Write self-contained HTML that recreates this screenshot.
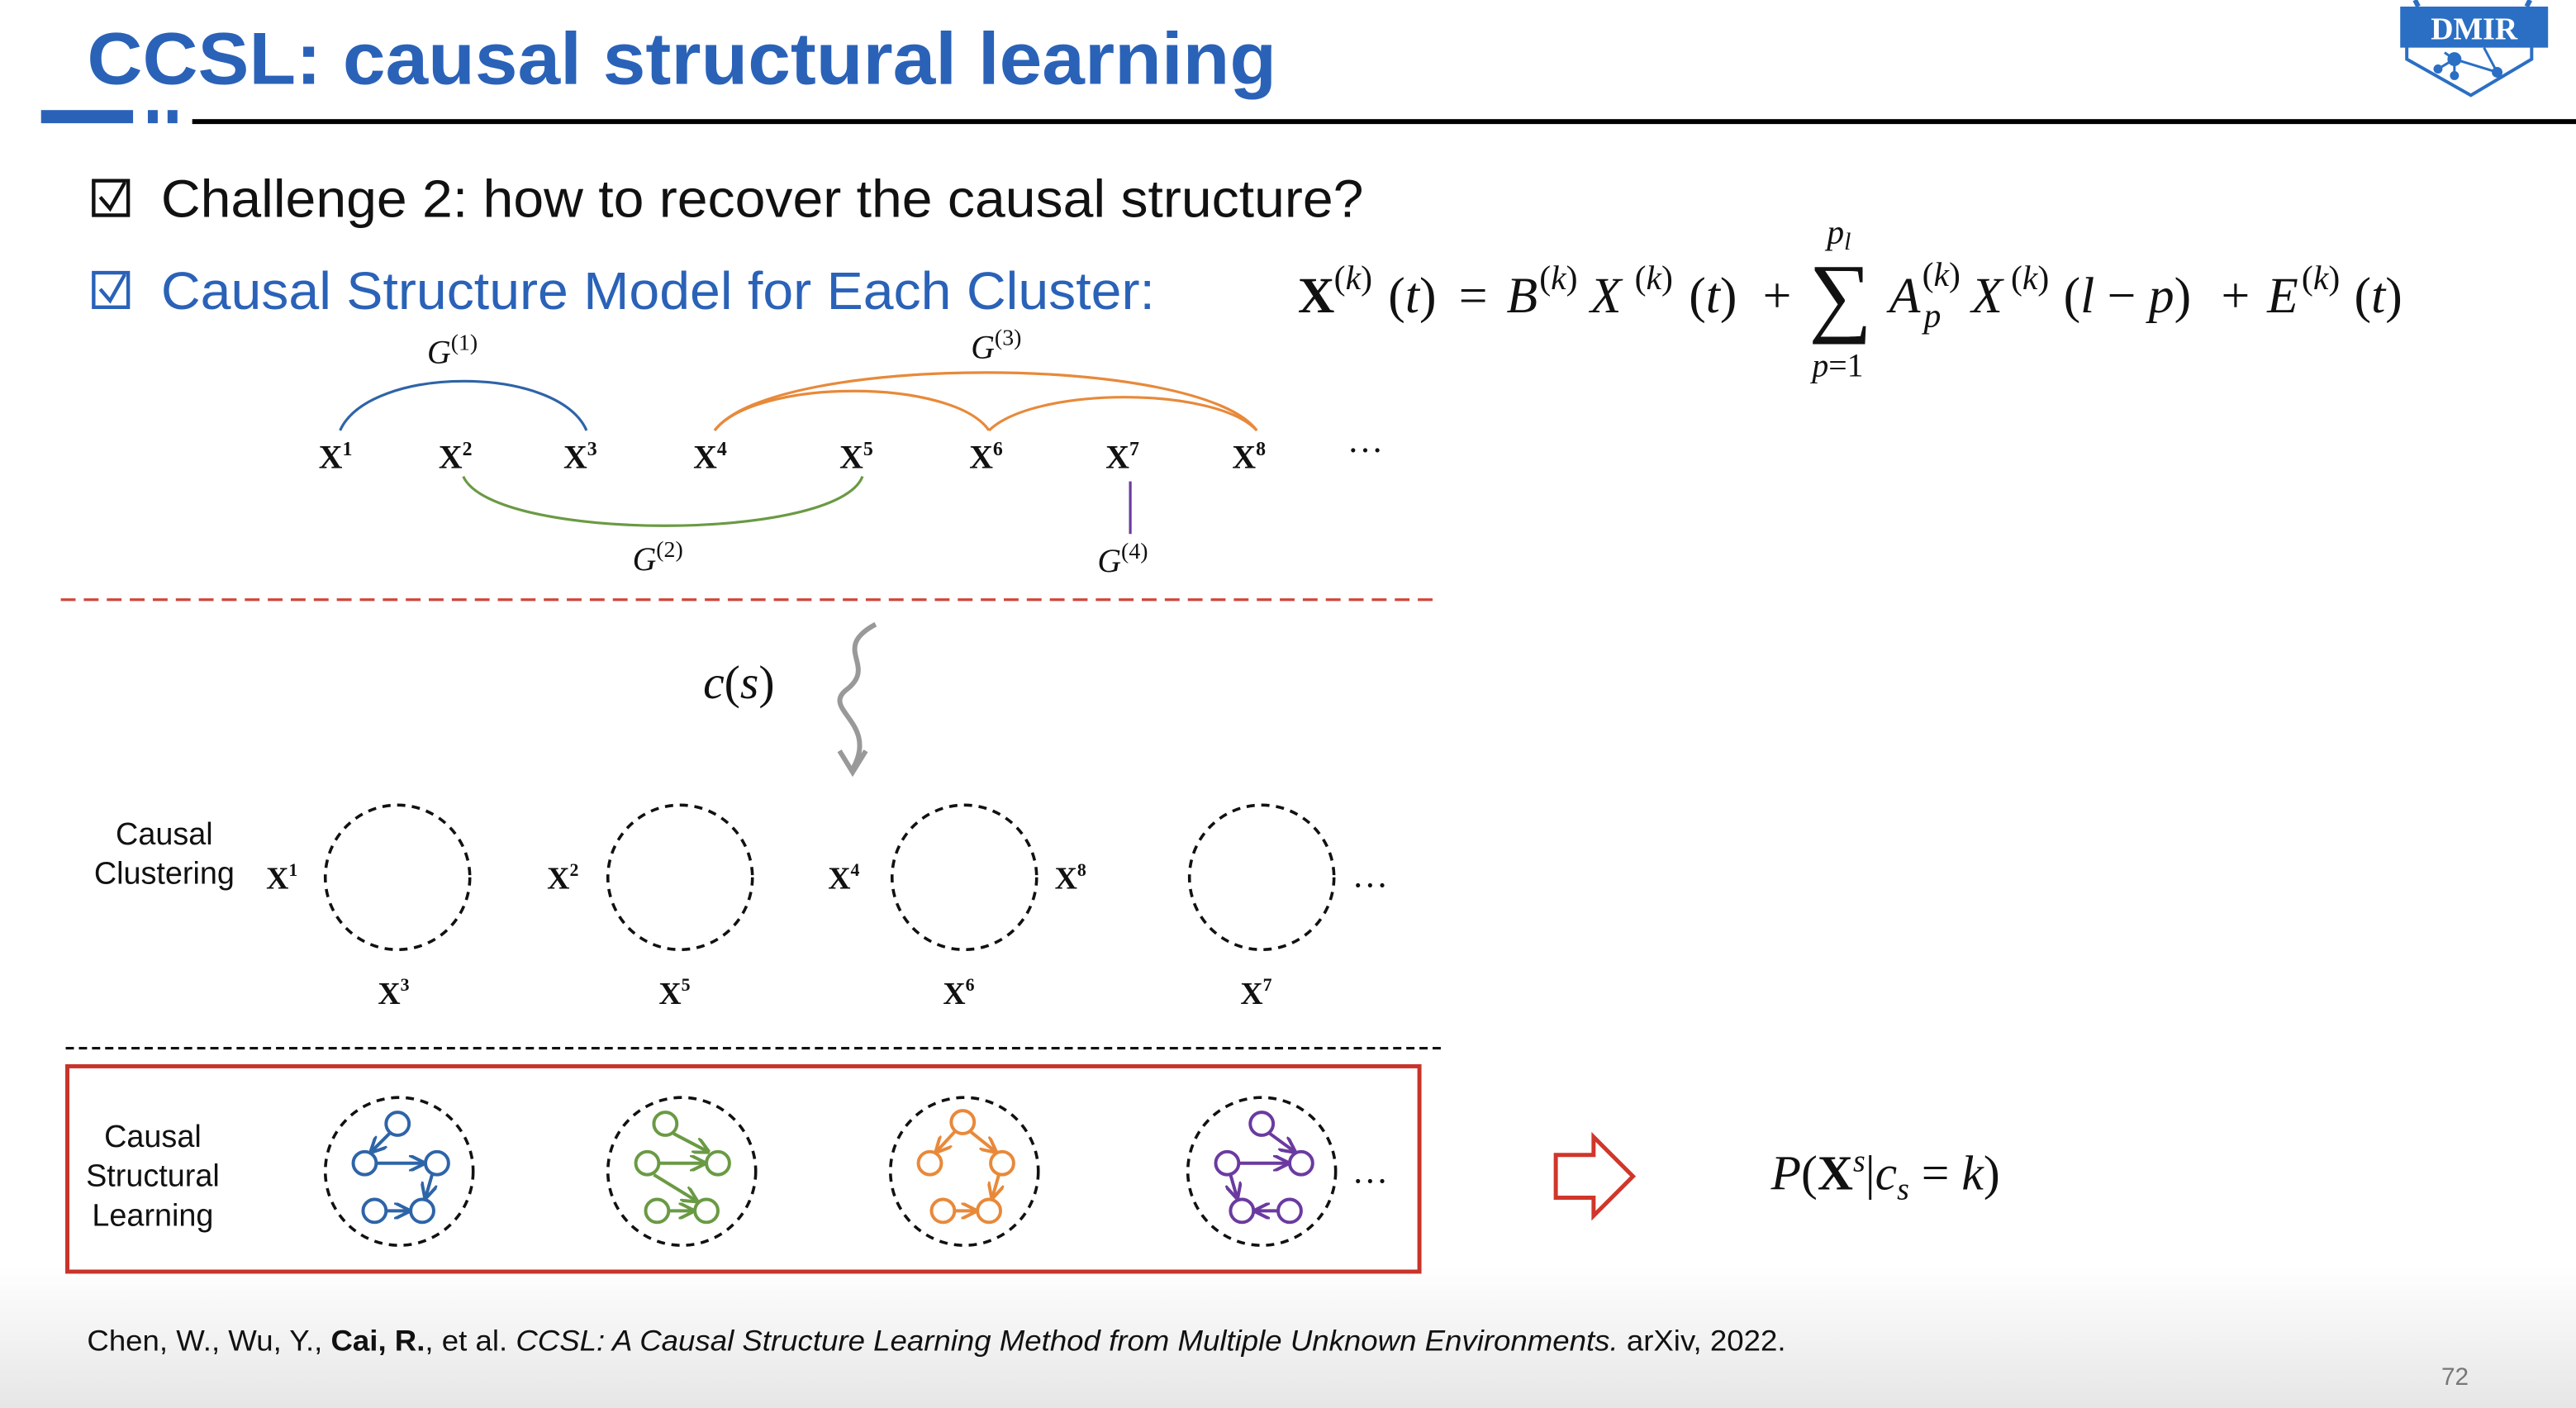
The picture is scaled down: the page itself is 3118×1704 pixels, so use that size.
<!DOCTYPE html>
<html><head><meta charset="utf-8">
<style>
html,body{margin:0;padding:0;background:#fff;}
svg{display:block;}
.s{font-family:"Liberation Serif",serif;}
.a{font-family:"Liberation Sans",sans-serif;}
</style></head><body>
<svg width="3118" height="1704" viewBox="0 0 1568 857" preserveAspectRatio="none" xmlns="http://www.w3.org/2000/svg">
<defs>
<linearGradient id="bg" x1="0" y1="0" x2="0" y2="1">
<stop offset="0" stop-color="#ffffff"/><stop offset="1" stop-color="#e6e6e6"/>
</linearGradient>
<marker id="mb" viewBox="0 0 10 10" refX="9" refY="5" markerWidth="5" markerHeight="5" orient="auto"><path d="M0,0 L10,5 L0,10" fill="none" stroke="#2e64a8" stroke-width="2"/></marker>
<marker id="mg" viewBox="0 0 10 10" refX="9" refY="5" markerWidth="5" markerHeight="5" orient="auto"><path d="M0,0 L10,5 L0,10" fill="none" stroke="#6a9a44" stroke-width="2"/></marker>
<marker id="mo" viewBox="0 0 10 10" refX="9" refY="5" markerWidth="5" markerHeight="5" orient="auto"><path d="M0,0 L10,5 L0,10" fill="none" stroke="#e8893a" stroke-width="2"/></marker>
<marker id="mp" viewBox="0 0 10 10" refX="9" refY="5" markerWidth="5" markerHeight="5" orient="auto"><path d="M0,0 L10,5 L0,10" fill="none" stroke="#6b3aa0" stroke-width="2"/></marker>
</defs>
<rect x="0" y="0" width="1568" height="857" fill="#fff"/>
<rect x="0" y="770" width="1568" height="87" fill="url(#bg)"/>

<text x="53" y="51" class="a" font-size="45" font-weight="bold" fill="#2a62b8" textLength="724" lengthAdjust="spacingAndGlyphs">CCSL: causal structural learning</text>
<rect x="25" y="67" width="56" height="8" fill="#2a62b8"/>
<rect x="90" y="67" width="6" height="8" fill="#2a62b8"/>
<rect x="102" y="67" width="6" height="8" fill="#2a62b8"/>
<rect x="117" y="72.5" width="1451" height="3" fill="#000"/>

<path d="M1465,18 L1465,36 L1504,58 L1541,36 L1541,18 Z" fill="#fff" stroke="#2a6fc4" stroke-width="2"/>
<rect x="1461" y="4" width="90" height="25" fill="#2a6fc4"/>
<path d="M1470,0 L1472,4 M1540,0 L1538,4" stroke="#2a6fc4" stroke-width="3"/>
<text x="1506" y="24" text-anchor="middle" class="s" font-size="19" font-weight="bold" fill="#fff">DMIR</text>
<g stroke="#2a6fc4" stroke-width="1.5" fill="#2a6fc4">
<line x1="1494" y1="36" x2="1488" y2="32"/><line x1="1494" y1="36" x2="1520" y2="44"/><line x1="1494" y1="36" x2="1484" y2="42"/><line x1="1494" y1="36" x2="1494" y2="46"/><line x1="1512" y1="29" x2="1520" y2="44"/>
<circle cx="1494" cy="36" r="3.5"/><circle cx="1520" cy="44" r="2.5"/><circle cx="1484" cy="42" r="2"/><circle cx="1494" cy="46" r="2"/>
</g>

<g fill="none" stroke="#111" stroke-width="2.2"><rect x="57" y="110" width="21" height="21"/><path d="M61,120 L67,127 L76,111"/></g>
<text x="98" y="132" class="a" font-size="32" fill="#111" textLength="732" lengthAdjust="spacingAndGlyphs">Challenge 2: how to recover the causal structure?</text>
<g fill="none" stroke="#2a62b8" stroke-width="2.2"><rect x="57" y="166" width="21" height="21"/><path d="M61,176 L67,183 L76,167"/></g>
<text x="98" y="188" class="a" font-size="32" fill="#2a62b8" textLength="605" lengthAdjust="spacingAndGlyphs">Causal Structure Model for Each Cluster:</text>

<g class="s" font-size="31" fill="#111">
<text x="790" y="190" font-weight="bold">X</text>
<text x="812" y="176" font-size="21">(<tspan font-style="italic">k</tspan>)</text>
<text x="845" y="190">(<tspan font-style="italic">t</tspan>)</text>
<text x="888" y="190">=</text>
<text x="917" y="190" font-style="italic">B</text>
<text x="937" y="176" font-size="21">(<tspan font-style="italic">k</tspan>)</text>
<text x="968" y="190" font-style="italic">X</text>
<text x="995" y="176" font-size="21">(<tspan font-style="italic">k</tspan>)</text>
<text x="1028" y="190">(<tspan font-style="italic">t</tspan>)</text>
<text x="1073" y="190">+</text>
<text x="1101" y="198" font-size="54">∑</text>
<text x="1112" y="148" font-size="21" font-style="italic">p<tspan font-size="15" dy="4">l</tspan></text>
<text x="1103" y="229" font-size="20"><tspan font-style="italic">p</tspan>=1</text>
<text x="1150" y="190" font-style="italic">A</text>
<text x="1170" y="174" font-size="21">(<tspan font-style="italic">k</tspan>)</text>
<text x="1171" y="199" font-size="21" font-style="italic">p</text>
<text x="1200" y="190" font-style="italic">X</text>
<text x="1224" y="176" font-size="21">(<tspan font-style="italic">k</tspan>)</text>
<text x="1256" y="190">(<tspan font-style="italic">l</tspan> − <tspan font-style="italic">p</tspan>)</text>
<text x="1352" y="190">+</text>
<text x="1380" y="190" font-style="italic">E</text>
<text x="1401" y="176" font-size="21">(<tspan font-style="italic">k</tspan>)</text>
<text x="1433" y="190">(<tspan font-style="italic">t</tspan>)</text>
</g>

<g fill="none" stroke-width="1.6">
<path d="M207,262 C225,222 340,222 357,262" stroke="#2e64a8"/>
<path d="M435,262 C460,230 580,230 602,262" stroke="#e8893a"/>
<path d="M435,262 C470,215 730,215 765,262" stroke="#e8893a"/>
<path d="M602,262 C630,235 740,235 765,262" stroke="#e8893a"/>
<path d="M282,290 C300,330 510,330 525,290" stroke="#6a9a44"/>
<line x1="688" y1="293" x2="688" y2="325" stroke="#6b3aa0"/>
</g>
<g class="s" font-size="20" fill="#111">
<text x="260" y="221" font-size="20"><tspan font-style="italic">G</tspan><tspan font-size="14" dy="-8">(1)</tspan></text>
<text x="591" y="218" font-size="20"><tspan font-style="italic">G</tspan><tspan font-size="14" dy="-8">(3)</tspan></text>
<text x="385" y="347" font-size="20"><tspan font-style="italic">G</tspan><tspan font-size="14" dy="-8">(2)</tspan></text>
<text x="668" y="348" font-size="20"><tspan font-style="italic">G</tspan><tspan font-size="14" dy="-8">(4)</tspan></text>
<g font-weight="bold">
<text x="194" y="285">X<tspan font-size="12" dy="-8">1</tspan></text>
<text x="267" y="285">X<tspan font-size="12" dy="-8">2</tspan></text>
<text x="343" y="285">X<tspan font-size="12" dy="-8">3</tspan></text>
<text x="422" y="285">X<tspan font-size="12" dy="-8">4</tspan></text>
<text x="511" y="285">X<tspan font-size="12" dy="-8">5</tspan></text>
<text x="590" y="285">X<tspan font-size="12" dy="-8">6</tspan></text>
<text x="673" y="285">X<tspan font-size="12" dy="-8">7</tspan></text>
<text x="750" y="285">X<tspan font-size="12" dy="-8">8</tspan></text>
</g>
<text x="820" y="275" font-size="22">…</text>
</g>

<line x1="37" y1="365" x2="873" y2="365" stroke="#d0453a" stroke-width="1.6" stroke-dasharray="9,5"/>

<text x="428" y="425" class="s" font-size="29" font-style="italic" fill="#111">c<tspan font-style="normal">(</tspan>s<tspan font-style="normal">)</tspan></text>
<path d="M533,380 C505,395 535,405 515,420 C500,432 535,440 519,468" fill="none" stroke="#999" stroke-width="3"/>
<path d="M511,457 L519,470 L527,457" fill="none" stroke="#999" stroke-width="3"/>

<text x="100" y="514" text-anchor="middle" class="a" font-size="19" fill="#111">Causal</text>
<text x="100" y="538" text-anchor="middle" class="a" font-size="19" fill="#111">Clustering</text>
<g fill="none" stroke="#111" stroke-width="1.8" stroke-dasharray="5,4">
<circle cx="242" cy="534" r="44"/><circle cx="414" cy="534" r="44"/><circle cx="587" cy="534" r="44"/><circle cx="768" cy="534" r="44"/>
</g>
<g class="s" font-size="19" font-weight="bold" fill="#111">
<text x="162" y="541">X<tspan font-size="11" dy="-8">1</tspan></text>
<text x="230" y="611">X<tspan font-size="11" dy="-8">3</tspan></text>
<text x="333" y="541">X<tspan font-size="11" dy="-8">2</tspan></text>
<text x="401" y="611">X<tspan font-size="11" dy="-8">5</tspan></text>
<text x="504" y="541">X<tspan font-size="11" dy="-8">4</tspan></text>
<text x="642" y="541">X<tspan font-size="11" dy="-8">8</tspan></text>
<text x="574" y="611">X<tspan font-size="11" dy="-8">6</tspan></text>
<text x="755" y="611">X<tspan font-size="11" dy="-8">7</tspan></text>
</g>
<text x="823" y="540" class="s" font-size="22" fill="#111">…</text>

<line x1="40" y1="638" x2="877" y2="638" stroke="#111" stroke-width="1.6" stroke-dasharray="5,3"/>

<rect x="41" y="649" width="823" height="125" fill="none" stroke="#c8332a" stroke-width="2.5"/>
<g class="a" font-size="19" fill="#111" text-anchor="middle">
<text x="93" y="698">Causal</text><text x="93" y="722">Structural</text><text x="93" y="746">Learning</text>
</g>
<g fill="none" stroke="#111" stroke-width="1.8" stroke-dasharray="5,4">
<circle cx="243" cy="713" r="45"/><circle cx="415" cy="713" r="45"/><circle cx="587" cy="713" r="45"/><circle cx="768" cy="713" r="45"/>
</g>
<g fill="none" stroke="#2e64a8" stroke-width="2">
<circle cx="242" cy="684" r="7"/><circle cx="222" cy="708" r="7"/><circle cx="266" cy="708" r="7"/><circle cx="228" cy="737" r="7"/><circle cx="257" cy="737" r="7"/>
<line x1="237" y1="690" x2="226" y2="701" marker-end="url(#mb)"/>
<line x1="229" y1="708" x2="258" y2="708" marker-end="url(#mb)"/>
<line x1="263" y1="715" x2="259" y2="729" marker-end="url(#mb)"/>
<line x1="235" y1="737" x2="249" y2="737" marker-end="url(#mb)"/>
</g>
<g fill="none" stroke="#6a9a44" stroke-width="2">
<circle cx="405" cy="684" r="7"/><circle cx="394" cy="708" r="7"/><circle cx="437" cy="708" r="7"/><circle cx="400" cy="737" r="7"/><circle cx="430" cy="737" r="7"/>
<line x1="410" y1="690" x2="431" y2="701" marker-end="url(#mg)"/>
<line x1="401" y1="708" x2="429" y2="708" marker-end="url(#mg)"/>
<line x1="398" y1="715" x2="424" y2="731" marker-end="url(#mg)"/>
<line x1="407" y1="737" x2="422" y2="737" marker-end="url(#mg)"/>
</g>
<g fill="none" stroke="#e8893a" stroke-width="2">
<circle cx="586" cy="683" r="7"/><circle cx="566" cy="708" r="7"/><circle cx="610" cy="708" r="7"/><circle cx="574" cy="737" r="7"/><circle cx="602" cy="737" r="7"/>
<line x1="581" y1="689" x2="570" y2="701" marker-end="url(#mo)"/>
<line x1="591" y1="689" x2="606" y2="701" marker-end="url(#mo)"/>
<line x1="608" y1="715" x2="604" y2="729" marker-end="url(#mo)"/>
<line x1="581" y1="737" x2="594" y2="737" marker-end="url(#mo)"/>
</g>
<g fill="none" stroke="#6b3aa0" stroke-width="2">
<circle cx="768" cy="684" r="7"/><circle cx="747" cy="708" r="7"/><circle cx="792" cy="708" r="7"/><circle cx="756" cy="737" r="7"/><circle cx="785" cy="737" r="7"/>
<line x1="773" y1="690" x2="788" y2="701" marker-end="url(#mp)"/>
<line x1="754" y1="708" x2="784" y2="708" marker-end="url(#mp)"/>
<line x1="749" y1="715" x2="753" y2="729" marker-end="url(#mp)"/>
<line x1="778" y1="737" x2="764" y2="737" marker-end="url(#mp)"/>
</g>
<text x="823" y="720" class="s" font-size="22" fill="#111">…</text>

<path d="M947,703 L970,703 L970,692 L994,716 L970,740 L970,729 L947,729 Z" fill="#fff" stroke="#d0362a" stroke-width="2.5"/>
<text x="1078" y="724" class="s" font-size="30" fill="#111"><tspan font-style="italic">P</tspan>(<tspan font-weight="bold">X</tspan><tspan font-size="19" dy="-11" font-style="italic">s</tspan><tspan dy="11">|</tspan><tspan font-style="italic">c</tspan><tspan font-size="19" dy="6" font-style="italic">s</tspan><tspan dy="-6"> = </tspan><tspan font-style="italic">k</tspan>)</text>

<text x="53" y="822" class="a" font-size="17.5" fill="#111" textLength="1034" lengthAdjust="spacingAndGlyphs">Chen, W., Wu, Y., <tspan font-weight="bold">Cai, R.</tspan>, et al. <tspan font-style="italic">CCSL: A Causal Structure Learning Method from Multiple Unknown Environments.</tspan> arXiv, 2022.</text>
<text x="1486" y="843" class="a" font-size="15" fill="#777">72</text>
</svg>
</body></html>
